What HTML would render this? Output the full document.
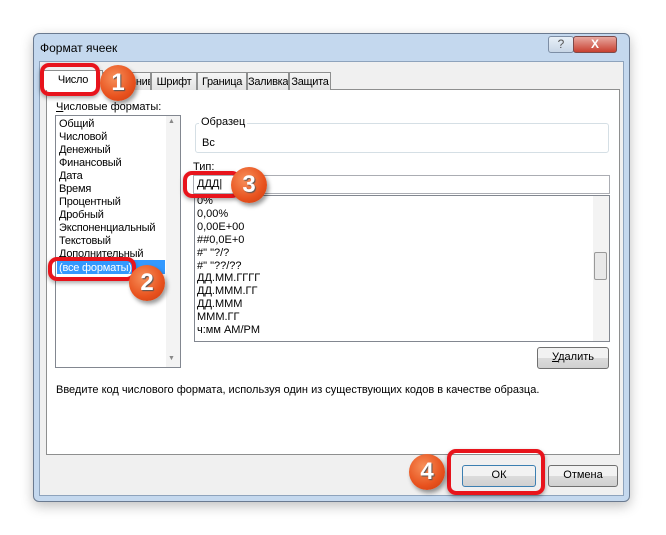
<!DOCTYPE html>
<html><head><meta charset="utf-8"><style>
*{box-sizing:border-box;margin:0;padding:0}
body{width:666px;height:535px;background:#fff;position:relative;overflow:hidden;font-family:"Liberation Sans","DejaVu Sans",sans-serif;font-size:11px;color:#000}
.a{position:absolute;white-space:nowrap}
.win{left:33px;top:33px;width:597px;height:469px;border:1px solid #6a7a90;border-radius:6px;background:#c4d8ee;box-shadow:0 4px 12px rgba(0,0,0,.25)}
.content{left:39px;top:61px;width:585px;height:435px;background:#f0f0f0;border:1px solid #8ea3bc}
.page{left:46px;top:89px;width:574px;height:366px;background:#fff;border:1px solid #8e8f8f}
.tab{top:72px;height:18px;border:1px solid #8e8f8f;border-bottom:none;background:linear-gradient(#f6f6f6,#e2e2e2);padding-top:3px;text-align:center;font-size:11px;letter-spacing:-0.3px;overflow:hidden}
.list{border:1px solid #828790;background:#fff}
.btn{border:1px solid #707070;border-radius:3px;background:linear-gradient(#f2f2f2 50%,#dcdcdc 50%,#d0d0d0);text-align:center;line-height:19px}
.ring{border:4px solid #e8141c;border-radius:9px;box-shadow:0 2px 4px rgba(0,0,0,.35)}
.num{width:36px;height:36px;border-radius:50%;background:radial-gradient(circle at 40% 35%,#f7905a,#e8521e 60%,#c83a10);color:#fff;font-weight:bold;font-size:24px;text-align:center;line-height:36px;box-shadow:2px 3px 4px rgba(0,0,0,.4);text-shadow:1px 1px 1px #555}
.it{line-height:13px;padding-left:3px;letter-spacing:-0.2px}
</style></head><body>
<div class="a win"></div>
<div class="a" style="left:40px;top:41px;font-size:12px">Формат ячеек</div>
<div class="a" style="left:548px;top:36px;width:26px;height:17px;border:1px solid #7d8ea5;border-radius:3px;background:linear-gradient(#e8f0f8,#c8d6e6);text-align:center;font-size:12px;color:#555">?</div>
<div class="a" style="left:573px;top:36px;width:44px;height:17px;border:1px solid #7d4a4a;border-radius:3px;background:linear-gradient(#e8a8a0,#c84030);text-align:center;color:#fff;font-weight:bold;font-size:12px">X</div>
<div class="a content"></div>
<div class="a page"></div>
<div class="a tab" style="left:43px;width:60px;top:70px;height:20px;background:#fff">Число</div>
<div class="a tab" style="left:103px;width:48px">Выравнивание</div>
<div class="a tab" style="left:151px;width:46px">Шрифт</div>
<div class="a tab" style="left:197px;width:50px">Граница</div>
<div class="a tab" style="left:247px;width:42px">Заливка</div>
<div class="a tab" style="left:289px;width:42px">Защита</div>
<div class="a" style="left:56px;top:101px"><u>Ч</u>исловые форматы:</div>
<div class="a list" style="left:55px;top:115px;width:126px;height:253px"></div>
<div class="a" style="left:166px;top:116px;width:14px;height:251px;background:#f3f3f3"></div>
<div class="a" style="left:168px;top:118px;font-size:7px;color:#888">▲</div>
<div class="a" style="left:168px;top:355px;font-size:7px;color:#888">▼</div>
<div class="a" style="left:57px;top:260px;width:108px;height:14px;background:#3399ff"></div>
<div class="a" style="left:56px;top:118px">
<div class="it">Общий</div><div class="it">Числовой</div><div class="it">Денежный</div><div class="it">Финансовый</div><div class="it">Дата</div><div class="it">Время</div><div class="it">Процентный</div><div class="it">Дробный</div><div class="it">Экспоненциальный</div><div class="it">Текстовый</div><div class="it">Дополнительный</div><div class="it" style="color:#fff;margin-top:1px">(все форматы)</div></div>
<div class="a" style="left:195px;top:123px;width:414px;height:30px;border:1px solid #d5dfe5;border-radius:3px"></div>
<div class="a" style="left:199px;top:116px;background:#fff;padding:0 2px">Образец</div>
<div class="a" style="left:202px;top:137px">Вс</div>
<div class="a" style="left:193px;top:161px">Тип:</div>
<div class="a list" style="left:193px;top:175px;width:417px;height:19px;border-color:#abadb3"></div>
<div class="a" style="left:197px;top:178px">ДДД|</div>
<div class="a list" style="left:194px;top:195px;width:416px;height:147px"></div>
<div class="a" style="left:593px;top:196px;width:16px;height:145px;background:#f3f3f3"></div>
<div class="a" style="left:594px;top:252px;width:13px;height:28px;border:1px solid #999;border-radius:2px;background:#e8e8e8"></div>
<div class="a" style="left:197px;top:197px;line-height:12.9px;overflow:hidden;height:143px;width:390px">
<div style="margin-top:-2px">0%</div><div>0,00%</div><div>0,00E+00</div><div>##0,0E+0</div><div>#" "?/?</div><div>#" "??/??</div><div>ДД.ММ.ГГГГ</div><div>ДД.МММ.ГГ</div><div>ДД.МММ</div><div>МММ.ГГ</div><div>ч:мм AM/PM</div></div>
<div class="a btn" style="left:537px;top:347px;width:72px;height:22px"><u>У</u>далить</div>
<div class="a" style="left:56px;top:384px">Введите код числового формата, используя один из существующих кодов в качестве образца.</div>
<div class="a btn" style="left:462px;top:465px;width:74px;height:22px;border-color:#3c7fb1">ОК</div>
<div class="a btn" style="left:548px;top:465px;width:70px;height:22px">Отмена</div>
<div class="a ring" style="left:40px;top:63px;width:60px;height:33px"></div>
<div class="a ring" style="left:48px;top:257px;width:88px;height:24px"></div>
<div class="a ring" style="left:183px;top:171px;width:58px;height:27px"></div>
<div class="a ring" style="left:447px;top:449px;width:98px;height:46px"></div>
<div class="a num" style="left:100px;top:65px">1</div>
<div class="a num" style="left:129px;top:265px">2</div>
<div class="a num" style="left:231px;top:167px">3</div>
<div class="a num" style="left:409px;top:454px">4</div>
</body></html>
